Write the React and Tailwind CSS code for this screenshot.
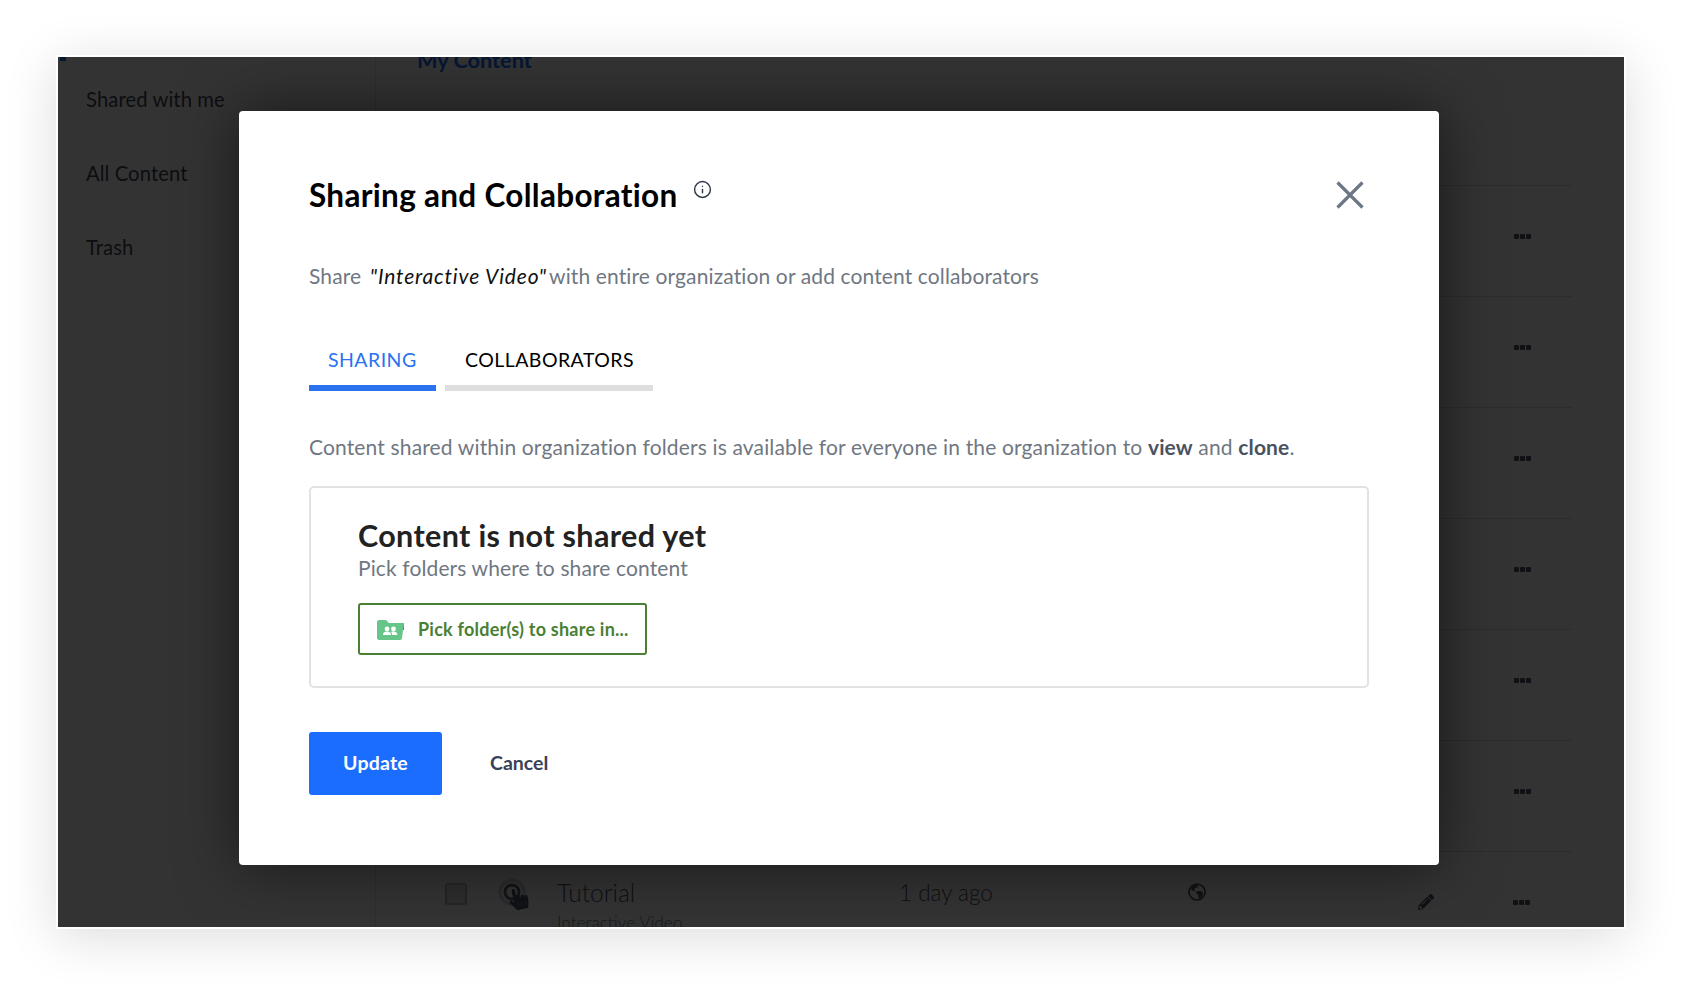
import React from 'react';
import { Info } from 'lucide-react';
import { FaPencilAlt, FaHandPointer } from 'react-icons/fa';

const ROW_COUNT = 6;

function Dots() {
  return (
    <div className="flex gap-[1px]">
      <span className="h-[5px] w-[5px] rounded-[1px] bg-[#4a5568]" />
      <span className="h-[5px] w-[5px] rounded-[1px] bg-[#4a5568]" />
      <span className="h-[5px] w-[5px] rounded-[1px] bg-[#4a5568]" />
    </div>
  );
}

function FolderIcon() {
  return (
    <svg width="27" height="20" viewBox="0 0 27 20" className="shrink-0">
      <path d="M10 3h15a2 2 0 0 1 2 2v5H10z" fill="#4d7f5f" />
      <path d="M2 0h7l3 3h15l-2 15a2 2 0 0 1-2 2H2a2 2 0 0 1-2-2V2a2 2 0 0 1 2-2z" fill="#66c68a" />
      <circle cx="10" cy="9" r="2.4" fill="#fff" />
      <circle cx="16.5" cy="9" r="2.4" fill="#fff" />
      <path d="M6 15c0-2.4 1.8-3.4 4-3.4s4 1 4 3.4z" fill="#fff" />
      <path d="M15 15c0-1.5-.4-2.500-1-3.100.7-.2 1.600-.3 2.500-.3 2.200 0 3.800 1 3.800 3.400z" fill="#fff" />
    </svg>
  );
}

function GlobeIcon() {
  return (
    <svg width="18" height="18" viewBox="0 0 18 18" fill="#4a5568">
      <circle cx="9" cy="9" r="8" fill="none" stroke="#4a5568" strokeWidth="1.6" />
      <path d="M5 2.500l5.500-.5-.5 2-2.500.8L6 6.500l1.500 1.500L5 8 3 6z" />
      <path d="M8 8.500l4-.5 3 1.500-.5 3-2.500 3-1.500-.5-.5-3.500-2-1.500z" />
    </svg>
  );
}

function InteractiveIcon() {
  return (
    <div className="relative h-[36px] w-[32px] text-[#4a5568]">
      <svg width="28" height="28" viewBox="0 0 28 28">
        <circle cx="14" cy="14" r="12" fill="none" stroke="#cfd4da" strokeWidth="3.500" />
        <circle cx="14" cy="14" r="7" fill="none" stroke="#5a6474" strokeWidth="3" />
      </svg>
      <FaHandPointer className="absolute left-[11px] top-[10px] h-[22px] w-[19px] -rotate-12" />
    </div>
  );
}

function BackgroundPage() {
  return (
    <div className="flex h-full bg-white">
      <aside className="relative w-[318px] shrink-0 border-r border-[#e5e5e5] pl-[28px] pt-[29px] text-[20.200px] tracking-[0.1px] text-[#3f4756]">
        <span className="absolute left-[2px] top-0 h-[4px] w-[6px] bg-[#1a6dff]" />
        <div className="flex flex-col gap-[47px] leading-[27px]">
          <div>Shared with me</div>
          <div>All Content</div>
          <div>Trash</div>
        </div>
      </aside>
      <main className="min-w-0 flex-1 pl-[41px] pr-[52px]">
        <h1 className="-mt-[11px] mb-[109px] h-[29px] text-[21.700px] font-bold leading-[29px] text-[#1a6dff]">My Content</h1>
        <div className="h-[1px]" />
        {Array.from({ length: ROW_COUNT }).map((_, i) => (
          <div key={i} className="flex h-[111px] items-start justify-end border-t border-[#dddddd] pr-[41px] pt-[48px]">
            <Dots />
          </div>
        ))}
        <div className="grid h-[111px] grid-cols-[28px_53px_59px_342px_289px_230px_95px_18px] border-t border-[#dddddd]">
          <div />
          <div className="mt-[31px] h-[22px] w-[22px] rounded-[3px] border-2 border-[#bbbbbb] bg-[#e2e2e2]" />
          <div className="mt-[26px]"><InteractiveIcon /></div>
          <div className="mt-[25px]">
            <div className="text-[24.500px] font-light leading-[32px] text-[#4a5568]">Tutorial</div>
            <div className="mt-[3px] text-[17.200px] font-light leading-[22px] text-[#718096]">Interactive Video</div>
          </div>
          <div className="mt-[25px] text-[22.500px] font-light leading-[32px] text-[#4a5568]">1 day ago</div>
          <div className="mt-[31px]"><GlobeIcon /></div>
          <div className="mt-[42px] text-[#4a5568]"><FaPencilAlt className="h-[16px] w-[16px]" /></div>
          <div className="mt-[48px]"><Dots /></div>
        </div>
      </main>
    </div>
  );
}

function ShareModal() {
  return (
    <div className="ml-[181px] mt-[54px] h-[754px] w-[1200px] rounded-[4px] bg-white pl-[70px] pr-[70px] pt-[64px] shadow-[0_0_60px_rgba(0,0,0,0.55)]">
      <div className="flex items-start justify-between pr-[5px]">
        <div className="flex items-start">
          <h2 className="text-[31.500px] font-bold leading-[40px] tracking-[0.3px] text-black">Sharing and Collaboration</h2>
          <Info className="ml-[15px] mt-[5px] h-[19px] w-[19px] text-[#2d3748]" strokeWidth={1.8} />
        </div>
        <svg width="28" height="28" viewBox="0 0 28 28" className="mt-[6px]">
          <path d="M1.500 1.500l25 25M26.500 1.500l-25 25" stroke="#6b7785" strokeWidth="3.200" fill="none" />
        </svg>
      </div>

      <p className="mt-[46px] text-[21px] leading-[30px] tracking-[0.12px] text-[#6f7782]">
        Share <em className="-mr-[3px] ml-[3px] tracking-[0.85px] text-[#111111]">"Interactive Video"</em> with entire organization or add content collaborators
      </p>

      <div className="mt-[54px] flex gap-[9px]">
        <div className="w-[127px] border-b-[6px] border-[#2a72ee] pb-[10px] pl-[19px] text-[19.500px] leading-[30px] tracking-[0.45px] text-[#2a72ee]">SHARING</div>
        <div className="w-[208px] border-b-[6px] border-[#dedede] pb-[10px] pl-[20px] text-[19.500px] leading-[30px] tracking-[0.45px] text-black">COLLABORATORS</div>
      </div>

      <p className="mt-[41px] text-[21px] leading-[30px] tracking-[0.15px] text-[#6f7782]">
        Content shared within organization folders is available for everyone in the organization to <b className="text-[#4a5260]">view</b> and <b className="text-[#4a5260]">clone</b>.
      </p>

      <div className="mt-[24px] h-[202px] rounded-[5px] border-2 border-[#e2e2e2] pl-[47px] pt-[27px]">
        <h3 className="text-[30.500px] font-bold leading-[40px] tracking-[0.35px] text-[#222222]">Content is not shared yet</h3>
        <p className="-mt-[2px] text-[21px] leading-[30px] tracking-[0.12px] text-[#6f7782]">Pick folders where to share content</p>
        <button className="mt-[20px] flex h-[52px] w-[289px] items-center gap-[14px] rounded-[3px] border-2 border-[#4a8033] pl-[17px] pt-[1px] text-[18px] font-bold tracking-[0.23px] text-[#4a8033]">
          <FolderIcon />
          Pick folder(s) to share in...
        </button>
      </div>

      <div className="mt-[44px] flex items-center">
        <button className="h-[63px] w-[133px] rounded-[3px] bg-[#1a6dff] pb-[2px] text-[19.500px] font-bold tracking-[0.2px] text-white">Update</button>
        <button className="ml-[48px] pb-[2px] text-[19.500px] font-bold text-[#3a4256]">Cancel</button>
      </div>
    </div>
  );
}

export default function App() {
  return (
    <div className="h-[991px] w-full overflow-hidden bg-white pl-[56px] pt-[55px] font-['Lato','Noto_Sans',sans-serif]">
      <div className="relative h-[874px] w-[1570px] overflow-hidden border-2 border-white shadow-[0_8px_50px_rgba(0,0,0,0.14)]">
        <BackgroundPage />
        <div className="absolute inset-0 bg-black/80">
          <ShareModal />
        </div>
      </div>
    </div>
  );
}
